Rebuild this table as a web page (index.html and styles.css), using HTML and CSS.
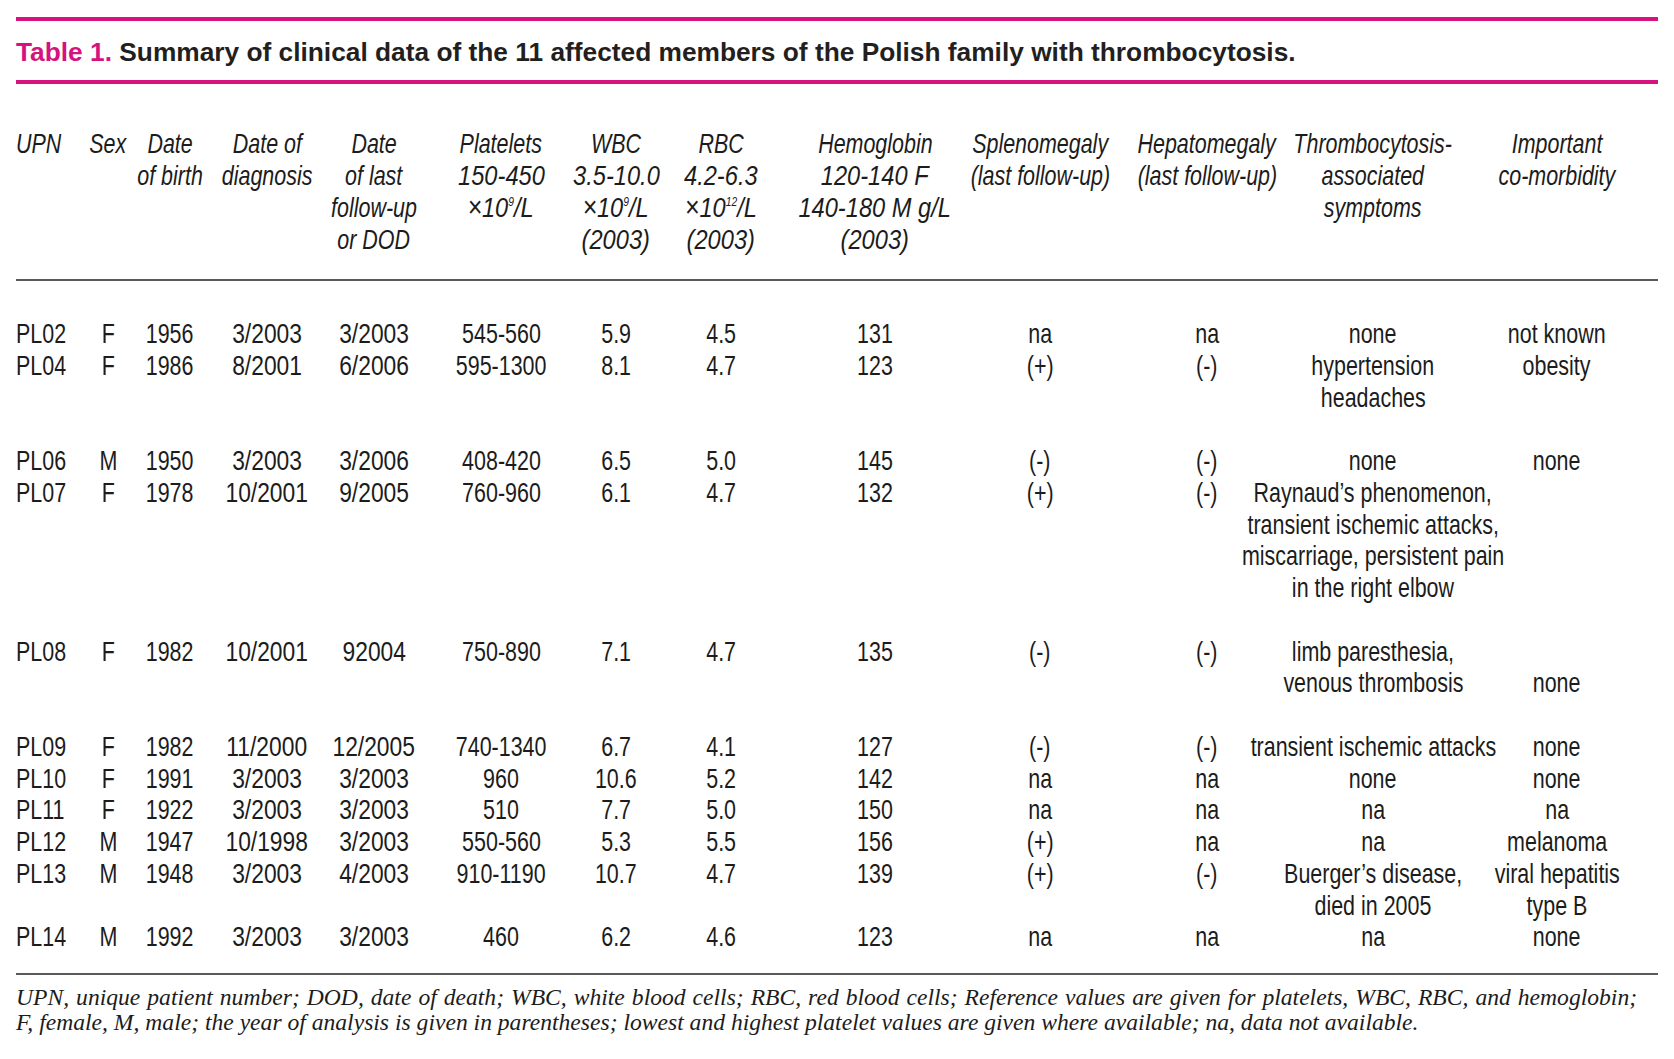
FILE: index.html
```html
<!DOCTYPE html>
<html lang="en">
<head>
<meta charset="utf-8">
<title>Table 1</title>
<link rel="stylesheet" href="styles.css">
</head>
<body>
<div class="page">
  <div class="rule-pink"></div>
  <div class="title"><span class="label">Table 1.</span> Summary of clinical data of the 11 affected members of the Polish family with thrombocytosis.</div>
  <div class="rule-pink"></div>

  <div class="table">
    <div class="head grid">
      <div class="c l"><span>UPN</span></div>
      <div class="c"><span>Sex</span></div>
      <div class="c"><span>Date</span><span>of birth</span></div>
      <div class="c"><span>Date of</span><span>diagnosis</span></div>
      <div class="c"><span>Date</span><span>of last</span><span>follow-up</span><span>or DOD</span></div>
      <div class="c"><span>Platelets</span><span class="n">150-450</span><span class="n"><span class="x">×</span>10<sup class="sup">9</sup>/L</span></div>
      <div class="c"><span>WBC</span><span class="n">3.5-10.0</span><span class="n"><span class="x">×</span>10<sup class="sup">9</sup>/L</span><span class="n">(2003)</span></div>
      <div class="c"><span>RBC</span><span class="n">4.2-6.3</span><span class="n"><span class="x">×</span>10<sup class="sup">12</sup>/L</span><span class="n">(2003)</span></div>
      <div class="c"><span>Hemoglobin</span><span class="n">120-140 F</span><span class="n">140-180 M g/L</span><span class="n">(2003)</span></div>
      <div class="c"><span>Splenomegaly</span><span>(last follow-up)</span></div>
      <div class="c"><span>Hepatomegaly</span><span>(last follow-up)</span></div>
      <div class="c"><span>Thrombocytosis-</span><span>associated</span><span>symptoms</span></div>
      <div class="c"><span>Important</span><span>co-morbidity</span></div>
    </div>

    <div class="body">
      <div class="row grid">
        <div class="c l"><span>PL02</span></div><div class="c"><span>F</span></div><div class="c"><span>1956</span></div><div class="c"><span>3/2003</span></div><div class="c"><span>3/2003</span></div><div class="c"><span>545-560</span></div><div class="c"><span>5.9</span></div><div class="c"><span>4.5</span></div><div class="c"><span>131</span></div><div class="c"><span>na</span></div><div class="c"><span>na</span></div><div class="c"><span>none</span></div><div class="c"><span>not known</span></div>
      </div>
      <div class="row grid">
        <div class="c l"><span>PL04</span></div><div class="c"><span>F</span></div><div class="c"><span>1986</span></div><div class="c"><span>8/2001</span></div><div class="c"><span>6/2006</span></div><div class="c"><span>595-1300</span></div><div class="c"><span>8.1</span></div><div class="c"><span>4.7</span></div><div class="c"><span>123</span></div><div class="c"><span>(+)</span></div><div class="c"><span>(-)</span></div><div class="c"><span>hypertension</span><span>headaches</span></div><div class="c"><span>obesity</span></div>
      </div>
      <div class="row grid spaced">
        <div class="c l"><span>PL06</span></div><div class="c"><span>M</span></div><div class="c"><span>1950</span></div><div class="c"><span>3/2003</span></div><div class="c"><span>3/2006</span></div><div class="c"><span>408-420</span></div><div class="c"><span>6.5</span></div><div class="c"><span>5.0</span></div><div class="c"><span>145</span></div><div class="c"><span>(-)</span></div><div class="c"><span>(-)</span></div><div class="c"><span>none</span></div><div class="c"><span>none</span></div>
      </div>
      <div class="row grid">
        <div class="c l"><span>PL07</span></div><div class="c"><span>F</span></div><div class="c"><span>1978</span></div><div class="c"><span>10/2001</span></div><div class="c"><span>9/2005</span></div><div class="c"><span>760-960</span></div><div class="c"><span>6.1</span></div><div class="c"><span>4.7</span></div><div class="c"><span>132</span></div><div class="c"><span>(+)</span></div><div class="c"><span>(-)</span></div><div class="c"><span>Raynaud’s phenomenon,</span><span>transient ischemic attacks,</span><span>miscarriage, persistent pain</span><span>in the right elbow</span></div><div class="c"></div>
      </div>
      <div class="row grid spaced">
        <div class="c l"><span>PL08</span></div><div class="c"><span>F</span></div><div class="c"><span>1982</span></div><div class="c"><span>10/2001</span></div><div class="c"><span>92004</span></div><div class="c"><span>750-890</span></div><div class="c"><span>7.1</span></div><div class="c"><span>4.7</span></div><div class="c"><span>135</span></div><div class="c"><span>(-)</span></div><div class="c"><span>(-)</span></div><div class="c"><span>limb paresthesia,</span><span>venous thrombosis</span></div><div class="c bottom"><span>none</span></div>
      </div>
      <div class="row grid spaced">
        <div class="c l"><span>PL09</span></div><div class="c"><span>F</span></div><div class="c"><span>1982</span></div><div class="c"><span>11/2000</span></div><div class="c"><span>12/2005</span></div><div class="c"><span>740-1340</span></div><div class="c"><span>6.7</span></div><div class="c"><span>4.1</span></div><div class="c"><span>127</span></div><div class="c"><span>(-)</span></div><div class="c"><span>(-)</span></div><div class="c"><span>transient ischemic attacks</span></div><div class="c"><span>none</span></div>
      </div>
      <div class="row grid">
        <div class="c l"><span>PL10</span></div><div class="c"><span>F</span></div><div class="c"><span>1991</span></div><div class="c"><span>3/2003</span></div><div class="c"><span>3/2003</span></div><div class="c"><span>960</span></div><div class="c"><span>10.6</span></div><div class="c"><span>5.2</span></div><div class="c"><span>142</span></div><div class="c"><span>na</span></div><div class="c"><span>na</span></div><div class="c"><span>none</span></div><div class="c"><span>none</span></div>
      </div>
      <div class="row grid">
        <div class="c l"><span>PL11</span></div><div class="c"><span>F</span></div><div class="c"><span>1922</span></div><div class="c"><span>3/2003</span></div><div class="c"><span>3/2003</span></div><div class="c"><span>510</span></div><div class="c"><span>7.7</span></div><div class="c"><span>5.0</span></div><div class="c"><span>150</span></div><div class="c"><span>na</span></div><div class="c"><span>na</span></div><div class="c"><span>na</span></div><div class="c"><span>na</span></div>
      </div>
      <div class="row grid">
        <div class="c l"><span>PL12</span></div><div class="c"><span>M</span></div><div class="c"><span>1947</span></div><div class="c"><span>10/1998</span></div><div class="c"><span>3/2003</span></div><div class="c"><span>550-560</span></div><div class="c"><span>5.3</span></div><div class="c"><span>5.5</span></div><div class="c"><span>156</span></div><div class="c"><span>(+)</span></div><div class="c"><span>na</span></div><div class="c"><span>na</span></div><div class="c"><span>melanoma</span></div>
      </div>
      <div class="row grid">
        <div class="c l"><span>PL13</span></div><div class="c"><span>M</span></div><div class="c"><span>1948</span></div><div class="c"><span>3/2003</span></div><div class="c"><span>4/2003</span></div><div class="c"><span>910-1190</span></div><div class="c"><span>10.7</span></div><div class="c"><span>4.7</span></div><div class="c"><span>139</span></div><div class="c"><span>(+)</span></div><div class="c"><span>(-)</span></div><div class="c"><span>Buerger’s disease,</span><span>died in 2005</span></div><div class="c"><span>viral hepatitis</span><span>type B</span></div>
      </div>
      <div class="row grid">
        <div class="c l"><span>PL14</span></div><div class="c"><span>M</span></div><div class="c"><span>1992</span></div><div class="c"><span>3/2003</span></div><div class="c"><span>3/2003</span></div><div class="c"><span>460</span></div><div class="c"><span>6.2</span></div><div class="c"><span>4.6</span></div><div class="c"><span>123</span></div><div class="c"><span>na</span></div><div class="c"><span>na</span></div><div class="c"><span>na</span></div><div class="c"><span>none</span></div>
      </div>
    </div>
  </div>

  <div class="foot">
    <p class="wide">UPN, unique patient number; DOD, date of death; WBC, white blood cells; RBC, red blood cells; Reference values are given for platelets, WBC, RBC, and hemoglobin;</p>
    <p>F, female, M, male; the year of analysis is given in parentheses; lowest and highest platelet values are given where available; na, data not available.</p>
  </div>
</div>
</body>
</html>
```
FILE: styles.css
```css
* { box-sizing: border-box; }

html, body {
  margin: 0;
  padding: 0;
  background: #ffffff;
}

.page {
  width: 1674px;
  padding: 17px 16px 0 16px;
}

.rule-pink {
  height: 4px;
  background: #d5127e;
}

.title {
  height: 59px;
  padding-top: 3px;
  line-height: 56px;
  font-family: "Liberation Sans", Arial, sans-serif;
  font-size: 26.3px;
  font-weight: bold;
  color: #231f20;
  white-space: nowrap;
}

.title .label {
  color: #d5127e;
}

.table {
  padding-top: 44px;
  font-family: "Liberation Sans", Arial, sans-serif;
  font-size: 27.5px;
  color: #1c1c1c;
}

.grid {
  display: grid;
  grid-template-columns: 64px 56px 68px 126px 88px 166px 64px 146px 162px 168px 166px 166px 202px;
}

/* cell: stacked lines, centred on the column axis (condensed type emulated by a horizontal squeeze) */
.c {
  display: flex;
  flex-direction: column;
  align-items: center;
  white-space: nowrap;
  min-width: 0;
}

.c > span {
  transform: scaleX(0.78);
  transform-origin: 50% 50%;
}

.c.l {
  align-items: flex-start;
}

.c.l > span {
  transform-origin: 0 50%;
}

.c.bottom {
  justify-content: flex-end;
}

/* dates (diagnosis, last follow-up) set a little wider */
.row > .c:nth-child(4) > span,
.row > .c:nth-child(5) > span {
  transform: scaleX(0.83);
}

.head {
  font-style: italic;
  line-height: 32px;
  padding-bottom: 23px;
  border-bottom: 2px solid #5a5a5a;
}

.head .c > span.n {
  transform: scaleX(0.86);
}

.x {
  font-size: 29px;
  line-height: 0;
}

.sup {
  font-size: 12px;
  line-height: 0;
  vertical-align: 11px;
}

.body {
  padding-top: 37px;
  padding-bottom: 20px;
  line-height: 31.75px;
  border-bottom: 2px solid #5a5a5a;
}

.row.spaced {
  margin-top: 31.75px;
}

.foot {
  padding-top: 10px;
  font-family: "Liberation Serif", "Times New Roman", serif;
  font-style: italic;
  font-size: 23.6px;
  line-height: 25px;
  color: #1c1c1c;
}

.foot p {
  margin: 0;
  white-space: nowrap;
}

.foot p.wide {
  word-spacing: 1.1px;
}
```
